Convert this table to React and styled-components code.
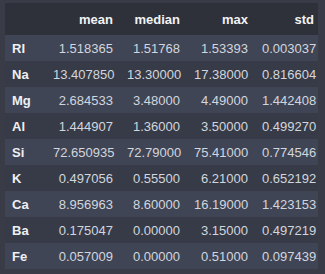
import React from "react";
import styled, { createGlobalStyle } from "styled-components";

const GlobalStyle = createGlobalStyle`
    html, body {
        margin: 0;
        padding: 0;
        background: #393c47;
    }
    body {
        font-family: "Liberation Sans", Arial, sans-serif;
    }
`;

const Wrapper = styled.div`
    padding: 3px 0 0 5px;
    width: 325px;
    height: 274px;
    box-sizing: border-box;
`;

const Table = styled.table`
    border-collapse: collapse;
    table-layout: fixed;
    width: 313px;
    font-size: 13px;
`;

const HeadRow = styled.tr`
    height: 32px;
    background: #2e313a;
`;

const Row = styled.tr`
    height: 26px;
    background: ${props => props.$odd ? "#404555" : "#373b47"};
`;

const Th = styled.th`
    padding: 0 ${props => props.$last ? "4px" : "7px"} 0 7px;
    text-align: right;
    color: #f2f3f5;
    font-weight: bold;
`;

const IndexCell = styled.th`
    padding: 0 7px;
    text-align: left;
    color: #eef0f4;
    font-weight: bold;
`;

const Td = styled.td`
    padding: 0 ${props => props.$last ? "4px" : "7px"} 0 7px;
    text-align: right;
    color: #d2d6de;
    white-space: nowrap;
`;

const columns = ["mean", "median", "max", "std"];
const widths = [41, 74, 67, 68, 63];

const rows = [
    ["RI", "1.518365", "1.51768", "1.53393", "0.003037"],
    ["Na", "13.407850", "13.30000", "17.38000", "0.816604"],
    ["Mg", "2.684533", "3.48000", "4.49000", "1.442408"],
    ["Al", "1.444907", "1.36000", "3.50000", "0.499270"],
    ["Si", "72.650935", "72.79000", "75.41000", "0.774546"],
    ["K", "0.497056", "0.55500", "6.21000", "0.652192"],
    ["Ca", "8.956963", "8.60000", "16.19000", "1.423153"],
    ["Ba", "0.175047", "0.00000", "3.15000", "0.497219"],
    ["Fe", "0.057009", "0.00000", "0.51000", "0.097439"],
];

const App = () => (
    <>
        <GlobalStyle />
        <Wrapper>
            <Table>
                <colgroup>
                    {widths.map((w, i) => <col key={i} style={{ width: w }} />)}
                </colgroup>
                <thead>
                    <HeadRow>
                        <Th />
                        {columns.map((c, i) => (
                            <Th key={c} $last={i === columns.length - 1}>{c}</Th>
                        ))}
                    </HeadRow>
                </thead>
                <tbody>
                    {rows.map(([name, ...values], r) => (
                        <Row key={name} $odd={r % 2 === 0}>
                            <IndexCell>{name}</IndexCell>
                            {values.map((v, i) => (
                                <Td key={i} $last={i === values.length - 1}>{v}</Td>
                            ))}
                        </Row>
                    ))}
                </tbody>
            </Table>
        </Wrapper>
    </>
);

export default App;
